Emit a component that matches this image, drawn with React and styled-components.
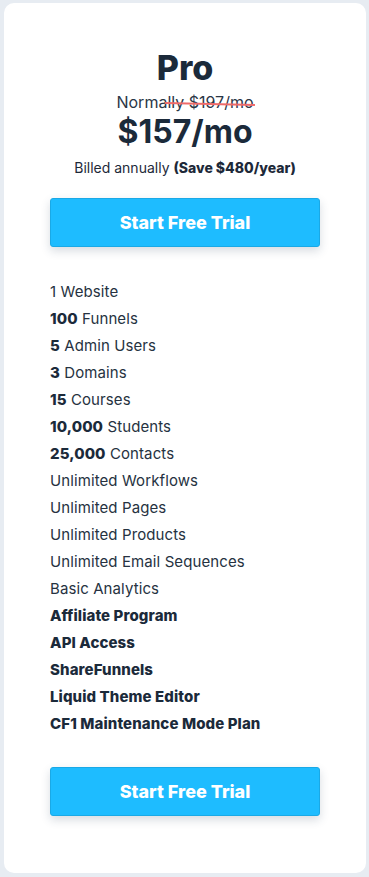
import React from 'react'
import styled, { createGlobalStyle } from 'styled-components'

const GlobalStyle = createGlobalStyle`
  html, body {
    margin: 0;
    padding: 0;
    background: #e7ecf2;
  }
  body {
    font-family: Inter, "Noto Sans", "Liberation Sans", sans-serif;
    color: #1d2939;
  }
`

const features = [
  { strong: '', text: '1 Website' },
  { strong: '100', text: 'Funnels' },
  { strong: '5', text: 'Admin Users' },
  { strong: '3', text: 'Domains' },
  { strong: '15', text: 'Courses' },
  { strong: '10,000', text: 'Students' },
  { strong: '25,000', text: 'Contacts' },
  { strong: '', text: 'Unlimited Workflows' },
  { strong: '', text: 'Unlimited Pages' },
  { strong: '', text: 'Unlimited Products' },
  { strong: '', text: 'Unlimited Email Sequences' },
  { strong: '', text: 'Basic Analytics' },
  { strong: 'Affiliate Program', text: '' },
  { strong: 'API Access', text: '' },
  { strong: 'ShareFunnels', text: '' },
  { strong: 'Liquid Theme Editor', text: '' },
  { strong: 'CF1 Maintenance Mode Plan', text: '' },
]

export default function App() {
  return (
    <>
      <GlobalStyle />
      <Page>
        <Card>
          <PlanName>Pro</PlanName>
          <Normally>
            Normally <Struck>$197/mo</Struck>
          </Normally>
          <Price>$157/mo</Price>
          <Billed>
            Billed annually <b>(Save $480/year)</b>
          </Billed>
          <TrialButton>Start Free Trial</TrialButton>
          <FeatureList>
            {features.map((f, i) => (
              <Feature key={i}>
                {f.strong && <b>{f.strong}</b>}
                {f.strong && f.text ? ' ' : ''}
                {f.text}
              </Feature>
            ))}
          </FeatureList>
          <TrialButton $bottom>Start Free Trial</TrialButton>
        </Card>
      </Page>
    </>
  )
}

const Page = styled.div`
  padding: 3px 3px 4px 4px;
  min-height: 877px;
  box-sizing: border-box;
`

const Card = styled.div`
  background: #ffffff;
  border-radius: 10px;
  height: 870px;
  box-sizing: border-box;
  padding: 45px 46px 0;
  display: flex;
  flex-direction: column;
  align-items: center;
`

const PlanName = styled.h2`
  margin: 0;
  font-size: 34px;
  line-height: 40px;
  font-weight: 800;
  color: #1b2a3a;
`

const Normally = styled.div`
  margin-top: 4px;
  font-size: 16px;
  line-height: 20px;
  color: #2a3646;
`

const Struck = styled.span`
  position: relative;
  &::after {
    content: '';
    position: absolute;
    left: -24px;
    right: -1px;
    top: 11px;
    height: 2px;
    background: #ef6b6b;
    transform: rotate(1.2deg);
  }
`

const Price = styled.div`
  margin-top: 1px;
  font-size: 32px;
  line-height: 38px;
  font-weight: 700;
  color: #1b2a3a;
`

const Billed = styled.div`
  margin-top: 8px;
  font-size: 14px;
  line-height: 18px;
  color: #1d2939;
  b {
    font-weight: 800;
  }
`

const TrialButton = styled.button`
  margin-top: ${(p) => (p.$bottom ? '30px' : '21px')};
  width: 270px;
  height: 49px;
  flex-shrink: 0;
  background: #1ebcff;
  border: 1px solid #1aa9e6;
  border-radius: 3px;
  box-shadow: 0 4px 10px rgba(40, 60, 90, 0.18);
  color: #ffffff;
  font-family: Inter, "Noto Sans", sans-serif;
  font-size: 18px;
  font-weight: 800;
  cursor: pointer;
`

const FeatureList = styled.ul`
  list-style: none;
  margin: 31px 0 0;
  padding: 0;
  align-self: stretch;
`

const Feature = styled.li`
  font-size: 15px;
  line-height: 27px;
  letter-spacing: 0.1px;
  color: #263241;
  b {
    font-weight: 800;
    color: #1b2a3a;
  }
`
